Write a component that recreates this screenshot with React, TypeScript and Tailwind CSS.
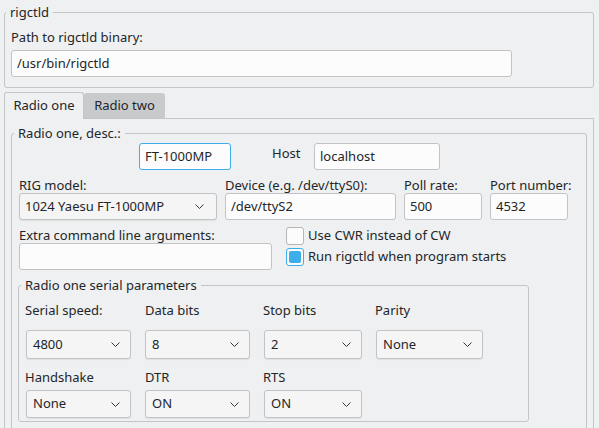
import React from "react";

const Chevron = ({ w = 9 }: { w?: number }) => (
  <svg width={w} height={5} viewBox={`0 0 ${w} 5`} className="shrink-0">
    <path d={`M0.5 0.5 L${w / 2} 4.5 L${w - 0.5} 0.5`} fill="none" stroke="#31363b" strokeWidth="1" />
  </svg>
);

const Input = ({ value, w, focus = false }: { value: string; w: string; focus?: boolean }) => (
  <div
    className={`${w} h-[27px] shrink-0 flex items-center pl-[5px] rounded-[3px] bg-[#fcfcfc] border ${
      focus ? "border-[#3daee9]" : "border-[#c2c3c5]"
    }`}
  >
    {value}
  </div>
);

const Combo = ({ value, w, h = "h-[27px]", pl = "pl-[5px]", pr = "pr-[12px]" }: { value: string; w: string; h?: string; pl?: string; pr?: string }) => (
  <div
    className={`${w} ${h} ${pl} ${pr} shrink-0 flex items-center justify-between rounded-[3px] bg-[#f5f5f6] border border-[#c2c3c5] shadow-[0_1px_1px_rgba(0,0,0,0.07)]`}
  >
    <span>{value}</span>
    <Chevron />
  </div>
);

const Title = ({ children }: { children: React.ReactNode }) => (
  <div className="-mt-[10px] -ml-[5px] w-fit px-[4px] bg-[#eff0f1] leading-[18px]">{children}</div>
);

export default function App() {
  return (
    <div
      className="w-[599px] h-[428px] overflow-hidden bg-[#eff0f1] text-[#232629] text-[13px] flex flex-col"
      style={{ fontFamily: '"Noto Sans", "DejaVu Sans", sans-serif' }}
    >
      {/* rigctld group */}
      <div className="mt-[12px] ml-[4px] w-[590px] shrink-0 border border-[#c4c5c7] rounded-[3px] px-[6px] pb-[10px]">
        <Title>rigctld</Title>
        <div className="mt-[7px] leading-[18px]">Path to rigctld binary:</div>
        <div className="mt-[4px]">
          <Input value="/usr/bin/rigctld" w="w-[501px]" />
        </div>
      </div>

      {/* tabs */}
      <div className="mt-[4px] ml-[4px] flex items-end shrink-0">
        <div className="relative z-10 -mb-[1px] w-[80px] h-[27px] flex items-center justify-center border border-b-0 border-[#c4c5c7] rounded-t-[3px] bg-[#eff0f1] pb-[1px]">
          Radio one
        </div>
        <div className="w-[81px] h-[25px] flex items-center justify-center rounded-t-[3px] bg-[#c9cacc]">
          Radio two
        </div>
      </div>

      {/* tab pane */}
      <div className="ml-[4px] w-[590px] border border-[#c4c5c7] px-[6px] shrink-0">
        <div className="mt-[14px] border border-[#c4c5c7] rounded-[3px] px-[7px] pb-[20px]">
          <Title>Radio one, desc.:</Title>

          {/* row 1 */}
          <div className="mt-[1px] flex items-start">
            <div className="ml-[120px]">
              <Input value="FT-1000MP" w="w-[92px]" focus />
            </div>
            <div className="ml-[41px] mt-[1px] leading-[18px] w-[42px]">Host</div>
            <Input value="localhost" w="w-[126px]" />
          </div>

          {/* row 2 */}
          <div className="mt-[7px] flex gap-[8px]">
            <div className="flex flex-col">
              <div className="leading-[16px]">RIG model:</div>
              <Combo value="1024 Yaesu FT-1000MP" w="w-[198px]" />
            </div>
            <div className="flex flex-col">
              <div className="leading-[16px] whitespace-nowrap">Device (e.g. /dev/ttyS0):</div>
              <Input value="/dev/ttyS2" w="w-[171px]" />
            </div>
            <div className="flex flex-col">
              <div className="leading-[16px]">Poll rate:</div>
              <Input value="500" w="w-[78px]" />
            </div>
            <div className="flex flex-col">
              <div className="leading-[16px] whitespace-nowrap">Port number:</div>
              <Input value="4532" w="w-[78px]" />
            </div>
          </div>

          {/* row 3 */}
          <div className="mt-[7px] flex items-start">
            <div className="flex flex-col">
              <div className="leading-[16px]">Extra command line arguments:</div>
              <Input value="" w="w-[253px]" />
            </div>
            <div className="ml-[14px] flex flex-col gap-[3px]">
              <div className="flex items-center gap-[4px] h-[18px]">
                <div className="w-[18px] h-[18px] rounded-[3px] border border-[#b5b6b8] bg-[#fcfcfc]" />
                <span>Use CWR instead of CW</span>
              </div>
              <div className="flex items-center gap-[4px] h-[18px]">
                <div className="w-[18px] h-[18px] rounded-[3px] border border-[#3daee9] bg-[#fcfcfc] p-[2px]">
                  <div className="w-full h-full rounded-[2px] bg-[#3daee9]" />
                </div>
                <span>Run rigctld when program starts</span>
              </div>
            </div>
          </div>

          {/* serial parameters */}
          <div className="mt-[15px] -ml-[1px] w-[511px] border border-[#c4c5c7] rounded-[3px] px-[7px] pb-[3px]">
            <Title>Radio one serial parameters</Title>
            <div className="mt-[8px] grid grid-cols-[105px_105px_98px_107px] gap-x-[14px]">
              <div className="leading-[16px] -ml-[1px]">Serial speed:</div>
              <div className="leading-[16px]">Data bits</div>
              <div className="leading-[16px] -ml-[1px]">Stop bits</div>
              <div className="leading-[16px] -ml-[1px]">Parity</div>

              <div className="mt-[12px]"><Combo value="4800" w="w-[105px]" h="h-[29px]" pl="pl-[6px]" pr="pr-[10px]" /></div>
              <div className="mt-[12px]"><Combo value="8" w="w-[105px]" h="h-[29px]" pl="pl-[6px]" pr="pr-[10px]" /></div>
              <div className="mt-[12px]"><Combo value="2" w="w-[98px]" h="h-[29px]" pl="pl-[6px]" pr="pr-[10px]" /></div>
              <div className="mt-[12px]"><Combo value="None" w="w-[107px]" h="h-[29px]" pl="pl-[6px]" pr="pr-[10px]" /></div>

              <div className="mt-[10px] leading-[16px] -ml-[1px]">Handshake</div>
              <div className="mt-[10px] leading-[16px]">DTR</div>
              <div className="mt-[10px] leading-[16px] -ml-[1px]">RTS</div>
              <div className="mt-[10px]" />

              <div className="mt-[5px]"><Combo value="None" w="w-[105px]" h="h-[28px]" pl="pl-[6px]" pr="pr-[10px]" /></div>
              <div className="mt-[5px]"><Combo value="ON" w="w-[105px]" h="h-[28px]" pl="pl-[6px]" pr="pr-[10px]" /></div>
              <div className="mt-[5px]"><Combo value="ON" w="w-[98px]" h="h-[28px]" pl="pl-[6px]" pr="pr-[10px]" /></div>
              <div className="mt-[5px]" />
            </div>
          </div>
        </div>
        <div className="h-[40px]" />
      </div>
    </div>
  );
}
